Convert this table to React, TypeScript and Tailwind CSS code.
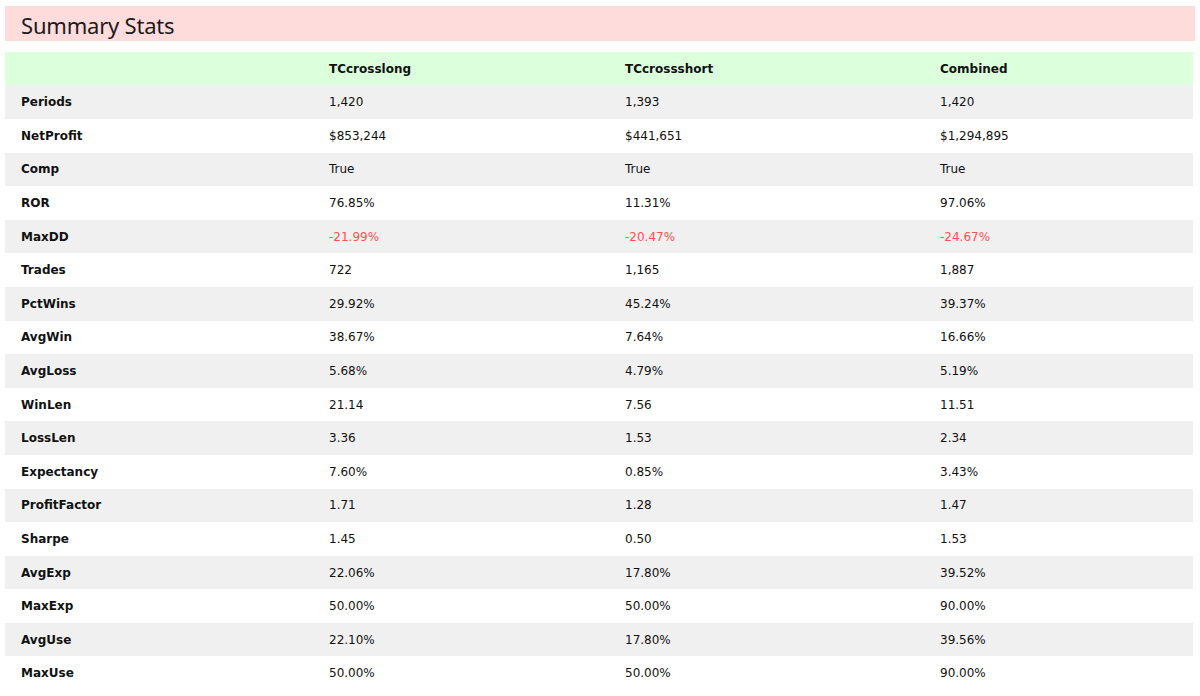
import React from "react";

const rows: [string, string, string, string][] = [
  ["Periods", "1,420", "1,393", "1,420"],
  ["NetProfit", "$853,244", "$441,651", "$1,294,895"],
  ["Comp", "True", "True", "True"],
  ["ROR", "76.85%", "11.31%", "97.06%"],
  ["MaxDD", "-21.99%", "-20.47%", "-24.67%"],
  ["Trades", "722", "1,165", "1,887"],
  ["PctWins", "29.92%", "45.24%", "39.37%"],
  ["AvgWin", "38.67%", "7.64%", "16.66%"],
  ["AvgLoss", "5.68%", "4.79%", "5.19%"],
  ["WinLen", "21.14", "7.56", "11.51"],
  ["LossLen", "3.36", "1.53", "2.34"],
  ["Expectancy", "7.60%", "0.85%", "3.43%"],
  ["ProfitFactor", "1.71", "1.28", "1.47"],
  ["Sharpe", "1.45", "0.50", "1.53"],
  ["AvgExp", "22.06%", "17.80%", "39.52%"],
  ["MaxExp", "50.00%", "50.00%", "90.00%"],
  ["AvgUse", "22.10%", "17.80%", "39.56%"],
  ["MaxUse", "50.00%", "50.00%", "90.00%"],
];

export default function App() {
  return (
    <div className="w-[1200px] h-[696px] bg-white overflow-hidden px-[5px] pt-[6px] text-[#111]">
      <div className="h-[35px] bg-[#ffdcdc] flex items-center pl-[16px] pt-[2px]">
        <h1 className="text-[22px] leading-none text-[#1a1a1a] tracking-[-0.2px]" style={{ fontFamily: '"Noto Sans", "Open Sans", sans-serif' }}>
          Summary Stats
        </h1>
      </div>
      <table
        className="mt-[11px] w-[1188px] border-collapse table-fixed text-[12px]"
        style={{ fontFamily: '"DejaVu Sans", Verdana, sans-serif' }}
      >
        <colgroup>
          <col className="w-[308px]" />
          <col className="w-[296px]" />
          <col className="w-[315px]" />
          <col className="w-[269px]" />
        </colgroup>
        <thead>
          <tr className="bg-[#dcffdc] h-[33.4px]">
            <th className="pl-[16px] text-left font-bold"></th>
            <th className="pl-[16px] text-left font-bold">TCcrosslong</th>
            <th className="pl-[16px] text-left font-bold">TCcrossshort</th>
            <th className="pl-[16px] text-left font-bold">Combined</th>
          </tr>
        </thead>
        <tbody>
          {rows.map((r, i) => {
            const neg = r[0] === "MaxDD";
            return (
              <tr key={r[0]} className={`h-[33.6px] ${i % 2 === 0 ? "bg-[#f0f0f0]" : "bg-white"}`}>
                <td className="pl-[16px] font-bold">{r[0]}</td>
                <td className={`pl-[16px] ${neg ? "text-[#ff5050]" : ""}`}>{r[1]}</td>
                <td className={`pl-[16px] ${neg ? "text-[#ff5050]" : ""}`}>{r[2]}</td>
                <td className={`pl-[16px] ${neg ? "text-[#ff5050]" : ""}`}>{r[3]}</td>
              </tr>
            );
          })}
        </tbody>
      </table>
    </div>
  );
}
